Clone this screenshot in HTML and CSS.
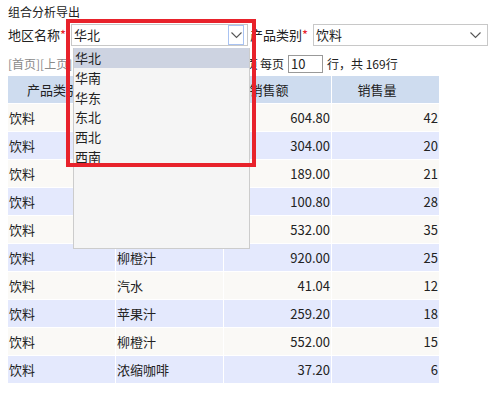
FILE: index.html
```html
<!DOCTYPE html>
<html lang="zh-CN">
<head>
<meta charset="utf-8">
<title>组合分析导出</title>
<link rel="stylesheet" href="styles.css">
</head>
<body>
<div class="title">组合分析导出</div>
<div class="params">
  <label class="param-label">地区名称<span class="req">*</span></label>
  <div class="select select-area">
    <span class="select-value">华北</span>
    <span class="select-btn focused">
      <svg width="11" height="7" viewBox="0 0 11 7"><polyline points="0.5,0.5 5.5,5.5 10.5,0.5" fill="none" stroke="#555" stroke-width="1.1"/></svg>
    </span>
  </div>
  <label class="param-label">产品类别<span class="req">*</span></label>
  <div class="select select-type">
    <span class="select-value">饮料</span>
    <span class="select-btn">
      <svg width="11" height="7" viewBox="0 0 11 7"><polyline points="0.5,0.5 5.5,5.5 10.5,0.5" fill="none" stroke="#555" stroke-width="1.1"/></svg>
    </span>
  </div>
</div>
<div class="pager">
  <span class="pager-nav">
    <span class="nav-links">[首页][上页][下页][尾页]</span>
    <span class="nav-page">第1页/共17页</span>
  </span>
  <span class="pager-text">每页</span>
  <span class="page-size">10</span>
  <span class="pager-text">行，共 169行</span>
</div>
<table class="report">
  <thead>
    <tr><th>产品类别</th><th>产品名称</th><th>销售额</th><th>销售量</th></tr>
  </thead>
  <tbody>
    <tr class="odd"><td>饮料</td><td>苹果汁</td><td class="num">604.80</td><td class="num">42</td></tr>
    <tr class="even"><td>饮料</td><td>牛奶</td><td class="num">304.00</td><td class="num">20</td></tr>
    <tr class="odd"><td>饮料</td><td>汽水</td><td class="num">189.00</td><td class="num">21</td></tr>
    <tr class="even"><td>饮料</td><td>啤酒</td><td class="num">100.80</td><td class="num">28</td></tr>
    <tr class="odd"><td>饮料</td><td>绿茶</td><td class="num">532.00</td><td class="num">35</td></tr>
    <tr class="even"><td>饮料</td><td>柳橙汁</td><td class="num">920.00</td><td class="num">25</td></tr>
    <tr class="odd"><td>饮料</td><td>汽水</td><td class="num">41.04</td><td class="num">12</td></tr>
    <tr class="even"><td>饮料</td><td>苹果汁</td><td class="num">259.20</td><td class="num">18</td></tr>
    <tr class="odd"><td>饮料</td><td>柳橙汁</td><td class="num">552.00</td><td class="num">15</td></tr>
    <tr class="even"><td>饮料</td><td>浓缩咖啡</td><td class="num">37.20</td><td class="num">6</td></tr>
  </tbody>
</table>
<ul class="dropdown">
  <li class="active">华北</li>
  <li>华南</li>
  <li>华东</li>
  <li>东北</li>
  <li>西北</li>
  <li>西南</li>
</ul>
<div class="callout"></div>
</body>
</html>
```
FILE: styles.css
```css
html, body {
  margin: 0;
  background: #fff;
}
body {
  position: relative;
  padding: 4px 0 0 8px;
  font-family: "Noto Sans CJK SC", "Noto Sans", sans-serif;
  color: #222;
  font-size: 13px;
}
.title {
  font-size: 12px;
  line-height: 16px;
  height: 16px;
}
.params {
  display: flex;
  align-items: center;
  margin-top: 4px;
  height: 22px;
}
.param-label {
  width: 63px;
  font-size: 13px;
  line-height: 22px;
  white-space: nowrap;
}
.req {
  color: #e8222b;
}
.select {
  box-sizing: border-box;
  display: flex;
  align-items: center;
  height: 22px;
  border: 1px solid #c8c8c8;
  background: #fff;
}
.select-area {
  width: 177px;
  margin-right: 2px;
}
.select-type {
  width: 175px;
}
.select-value {
  flex: 1;
  padding-left: 2px;
  font-size: 13px;
  line-height: 20px;
}
.select-btn {
  box-sizing: border-box;
  display: flex;
  align-items: center;
  justify-content: center;
  width: 16px;
  height: 20px;
  margin-right: 4px;
}
.select-btn svg {
  display: block;
}
.select-btn.focused {
  border: 1px solid #a9c3f2;
  margin-right: 3px;
}
.pager {
  display: flex;
  align-items: center;
  margin-top: 9px;
  height: 18px;
  font-size: 12px;
  line-height: 18px;
  white-space: nowrap;
}
.pager-nav {
  display: flex;
  justify-content: space-between;
  width: 252px;
  padding-right: 0;
}
.nav-links {
  color: #8a8a8a;
}
.nav-page {
  padding-right: 2px;
}
.page-size {
  box-sizing: border-box;
  width: 35px;
  height: 18px;
  margin: 0 4px;
  padding-left: 2px;
  border: 1px solid #999;
  font-size: 13px;
  line-height: 16px;
}
.report {
  margin-top: 3px;
  border-collapse: separate;
  border-spacing: 0;
  table-layout: fixed;
  width: 431px;
  font-size: 13px;
}
.report th,
.report td {
  box-sizing: border-box;
  width: 108px;
  height: 28px;
  padding: 0 1px 0 1px;
  border-right: 1px solid #fff;
  border-bottom: 1px solid #fff;
  line-height: 27px;
  white-space: nowrap;
  overflow: hidden;
}
.report th:last-child,
.report td:last-child {
  width: 107px;
  border-right: 0;
}
.report th {
  background: #cedcef;
  font-weight: normal;
  text-align: center;
  padding-right: 18px;
}
.report td.num {
  text-align: right;
}
.report tr.odd td {
  background: #faf9f6;
}
.report tr.even td {
  background: #e4e9fd;
}
.dropdown {
  position: absolute;
  left: 73px;
  top: 48px;
  box-sizing: border-box;
  width: 177px;
  height: 201px;
  margin: 0;
  padding: 0;
  list-style: none;
  background: #f5f5f5;
  border: 1px solid #ccc;
  border-top: 0;
}
.dropdown li {
  height: 19.8px;
  padding-left: 1px;
  font-size: 13px;
  line-height: 19.8px;
}
.dropdown li.active {
  background: #cdd3e1;
}
.callout {
  position: absolute;
  left: 66px;
  top: 19px;
  box-sizing: border-box;
  width: 190px;
  height: 148px;
  border: 4px solid #e8222b;
}
```
